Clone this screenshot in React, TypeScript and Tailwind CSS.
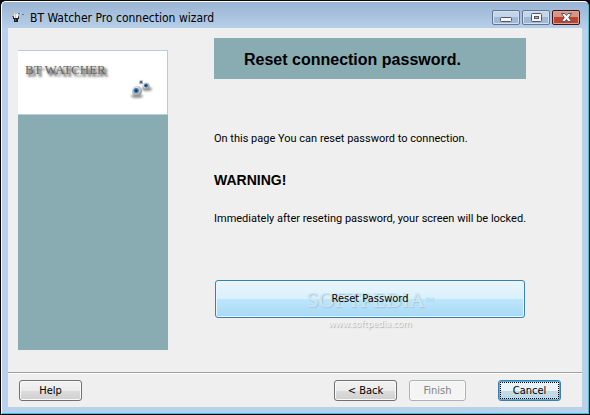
import type { ButtonHTMLAttributes } from "react";
import clsx from "clsx";

type WizardButtonProps = ButtonHTMLAttributes<HTMLButtonElement> & {
  focused?: boolean;
};

function WizardButton({ focused, className, children, ...rest }: WizardButtonProps) {
  return (
    <button
      type="button"
      className={clsx(
        "h-[21px] rounded-[3px] border text-[11px] leading-[17px]",
        focused
          ? "border-[#3c7fb1] bg-linear-to-b from-[#eaf3f9] from-50% to-[#c3d9e6] to-50% p-px shadow-[inset_0_0_0_1px_#4fb5e0] text-black"
          : "border-[#707070] bg-[linear-gradient(#f2f2f2,#ebebeb_50%,#dddddd_50%,#cfcfcf)] shadow-[inset_0_0_0_1px_#fafafa] text-black",
        "disabled:border-[#adb2b5] disabled:bg-none disabled:bg-[#f4f4f4] disabled:text-[#838383]",
        className,
      )}
      {...rest}
    >
      {focused ? (
        <span className="block h-[17px] border border-dotted border-black leading-[15px]">{children}</span>
      ) : (
        children
      )}
    </button>
  );
}

function HatIcon() {
  return (
    <svg width="16" height="16" viewBox="0 0 16 16" shapeRendering="crispEdges" aria-hidden="true">
      <path d="M4 2h1v1H4z" fill="#f3dc37" />
      <path d="M8 3h2v1H8zM12 4h2v1h-2z" fill="#6b7480" />
      <path d="M7 3h1v1H7zM10 3h1v1h-1z" fill="#d8e0e8" />
      <path d="M4 4h1v4H4zM6 4h2v4H6z" fill="#f6eef2" />
      <path d="M5 4h1v4H5z" fill="#dfb9ca" />
      <path d="M2 6h2v1H2zM8 6h1v1H8z" fill="#666" />
      <path d="M3 7h1v1h4V7h1v2H8v3H4V9H3z" fill="#222" />
      <path d="M5 9h1v2H5z" fill="#5d5d5d" />
    </svg>
  );
}

function EyesLogo() {
  return (
    <svg width="26" height="24" viewBox="0 0 26 24" aria-hidden="true">
      <defs>
        <radialGradient id="ball" cx="0.4" cy="0.35" r="0.65">
          <stop offset="0" stopColor="#eee" />
          <stop offset="0.5" stopColor="#d0d3d5" />
          <stop offset="1" stopColor="#8b8d90" />
        </radialGradient>
        <filter id="soft" x="-50%" y="-50%" width="200%" height="200%">
          <feGaussianBlur stdDeviation="1" />
        </filter>
      </defs>
      <g fill="#666" opacity="0.7" filter="url(#soft)">
        <ellipse cx="8" cy="17" rx="6" ry="2" />
        <ellipse cx="18" cy="10" rx="5" ry="2" />
      </g>
      <circle cx="12" cy="3" r="2.2" fill="url(#ball)" />
      <circle cx="12" cy="3" r="1.2" fill="#3f6391" />
      <circle cx="17" cy="7" r="3.6" fill="url(#ball)" />
      <circle cx="17" cy="6.6" r="2" fill="#2f6aa8" />
      <circle cx="17" cy="6.6" r="0.8" fill="#12304f" />
      <circle cx="8" cy="12" r="5" fill="url(#ball)" />
      <circle cx="7.2" cy="11.6" r="2.7" fill="#3b7ab8" />
      <circle cx="7.2" cy="11.6" r="1.2" fill="#12304f" />
    </svg>
  );
}

const captionClass =
  "flex h-[15px] w-7 items-center justify-center rounded-[2px] border border-[#5f7590] bg-linear-to-b from-[#c3d5e9] from-50% to-[#9fb9d6] to-50% shadow-[inset_0_0_0_1px_#d3e1f0]";

function TitleBar() {
  return (
    <header className="flex h-[26px] items-start pt-2 pl-2">
      <HatIcon />
      <h1 className="ml-1 flex-1 text-[12px] leading-4 whitespace-nowrap text-black">
        BT Watcher Pro connection wizard
      </h1>
      <div className="flex gap-0.5 pr-2">
        <button type="button" aria-label="Minimize" className={captionClass}>
          <svg width="12" height="11" viewBox="0 0 12 11" aria-hidden="true">
            <rect x="0.5" y="5.5" width="11" height="4" rx="1" fill="#f5f5f5" stroke="#535666" />
          </svg>
        </button>
        <button type="button" aria-label="Maximize" className={captionClass}>
          <svg width="12" height="11" viewBox="0 0 12 11" aria-hidden="true">
            <rect x="1.5" y="1.5" width="10" height="8" rx="1" fill="#f5f5f5" stroke="#535666" />
            <rect x="4.5" y="4.5" width="4" height="2" fill="#9fb9d6" stroke="#535666" />
          </svg>
        </button>
        <button
          type="button"
          aria-label="Close"
          className="flex h-[15px] w-7 items-center justify-center rounded-[2px] border border-[#43131a] bg-linear-to-b from-[#d89484] from-50% to-[#bd4530] to-50% shadow-[inset_0_0_0_1px_#dfa698]"
        >
          <svg width="13" height="11" viewBox="0 0 13 11" aria-hidden="true">
            <path
              d="M1.5 1.5h3.5l1.5 2 1.5-2h3.500L8.800 5.500l2.700 4H8L6.500 7.500 5 9.500H1.500l2.700-4z"
              fill="#f7f7f7"
              stroke="#535666"
              strokeLinejoin="round"
            />
          </svg>
        </button>
      </div>
    </header>
  );
}

function SidePanel() {
  return (
    <aside className="mt-[22px] flex h-[300px] w-[150px] flex-none flex-col bg-[#88acb2]">
      <div className="flex h-[65px] flex-col border-t border-r border-b border-[#b8d0d3] bg-white pt-[11px] pl-[7px]">
        <div className="font-['Liberation_Serif',serif] text-[13px] leading-4 whitespace-nowrap text-[#666] [text-shadow:2px_2px_3px_#333,3px_3px_2px_#aaa]">
          BT WATCHER
        </div>
        <div className="mt-px mr-3 self-end">
          <EyesLogo />
        </div>
      </div>
    </aside>
  );
}

export default function App() {
  return (
    <div className="flex min-h-screen flex-col border border-[#08080c] bg-[#08080c] font-['DejaVu_Sans_Condensed','Noto_Sans',sans-serif] text-[11px] text-black">
      <div className="flex flex-1 flex-col rounded-t-[5px] border border-t-white border-r-[#38c4dc] border-b-[#38c4dc] border-l-white bg-[#b9d1ea] bg-linear-to-b from-[#99b4d3] to-[#b9d1ea] to-[28px]">
        <TitleBar />
        <div className="mx-1.5 mb-1.5 flex flex-1 flex-col bg-[#efefef]">
          <main className="flex flex-1 pr-14 pl-2.5">
            <SidePanel />
            <section className="ml-[46px] min-w-0 flex-1 pt-2.5 pb-10">
              <h2 className="bg-[#88acb2] pt-3 pb-[9px] pl-[30px] font-['Liberation_Sans',sans-serif] text-base leading-5 font-bold">
                Reset connection password.
              </h2>
              <p className="mt-[52px] font-['Roboto',sans-serif] leading-4 whitespace-nowrap">
                On this page You can reset password to connection.
              </p>
              <p className="mt-[23px] font-['Liberation_Sans',sans-serif] text-sm leading-5 font-bold">WARNING!</p>
              <p className="mt-[21px] font-['Roboto',sans-serif] leading-4 whitespace-nowrap">
                Immediately after reseting password, your screen will be locked.
              </p>
              <div className="relative mt-[53px] px-px">
                <button
                  type="button"
                  className="h-[38px] w-full rounded-[3px] border border-[#3c7fb1] bg-[linear-gradient(#eaf6fd,#d9f0fc_50%,#bee6fd_50%,#a7d9f5)] shadow-[inset_0_0_0_1px_#e8f7fd]"
                >
                  <span className="relative z-10">Reset Password</span>
                </button>
                <div className="pointer-events-none absolute inset-x-0 top-2 text-center">
                  <div className="font-['Liberation_Serif',serif] text-[22px] leading-6 text-[#cde7f3] [text-shadow:1px_1px_1px_#9fc4d6]">
                    SOFTPEDIA<sup className="text-[9px]">™</sup>
                  </div>
                  <div className="mt-1 font-['Noto_Sans',sans-serif] text-[9px] leading-4 text-[#f6f6f6] [text-shadow:1px_1px_1px_#aaa]">
                    www.softpedia.com
                  </div>
                </div>
              </div>
            </section>
          </main>
          <footer className="flex border-t border-[#a0a0a0] pt-[7px] pr-[21px] pb-1.5 pl-[11px] shadow-[inset_0_1px_0_#fff]">
            <WizardButton className="w-[63px]">Help</WizardButton>
            <WizardButton className="ml-auto w-[63px]">&lt; Back</WizardButton>
            <WizardButton disabled className="ml-3 w-[57px]">
              Finish
            </WizardButton>
            <WizardButton focused className="ml-8 w-[63px]">
              Cancel
            </WizardButton>
          </footer>
        </div>
      </div>
    </div>
  );
}
